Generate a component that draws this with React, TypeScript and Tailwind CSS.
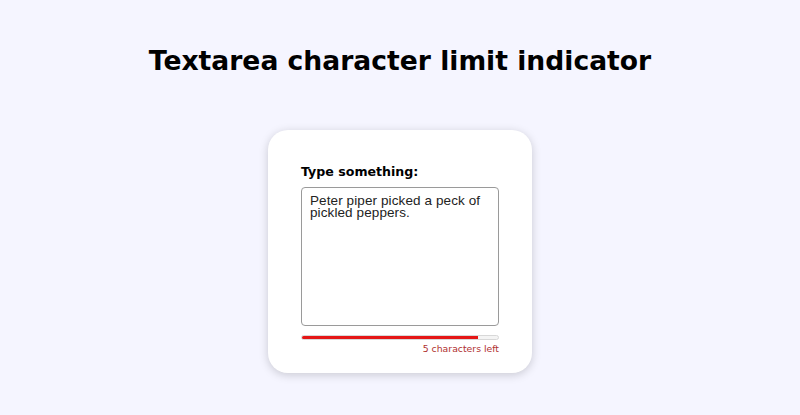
export default function App() {
  const text = "Peter piper picked a peck of pickled peppers.";
  const limit = 50;
  const left = limit - text.length;
  const pct = (text.length / limit) * 100;

  return (
    <div className="min-h-screen bg-[#f5f5ff] font-['DejaVu_Sans',Verdana,sans-serif]">
      <h1 className="pt-[45px] text-center text-[26.6px] font-bold leading-[32px] text-black">
        Textarea character limit indicator
      </h1>

      <div className="mt-[53px] flex justify-center">
        <div className="w-[264px] rounded-[20px] bg-white px-[33px] pb-[18px] pt-[34px] shadow-[0_2px_10px_rgba(0,0,0,0.18)]">
          <label className="block text-[12.6px] font-bold leading-[16px] text-black">
            Type something:
          </label>
          <textarea
            defaultValue={text}
            className="mt-[7px] block h-[139px] w-[198px] resize-none rounded-[4px] border border-[#9a9a9a] px-[8px] pb-[6px] pt-[7px] font-['Liberation_Sans',Arial,sans-serif] text-[13.5px] leading-[12px] tracking-[0.1px] text-[#222] outline-none"
          />
          <div className="mt-[9px] h-[5px] w-[198px] overflow-hidden rounded-full border border-[#d8d8d8] bg-[#f4f4f4]">
            <div className="h-full bg-[#e51616]" style={{ width: `${pct}%` }} />
          </div>
          <div className="mt-[3px] text-right text-[9.3px] leading-[12px] text-[#b03030]">
            {left} characters left
          </div>
        </div>
      </div>
    </div>
  );
}
